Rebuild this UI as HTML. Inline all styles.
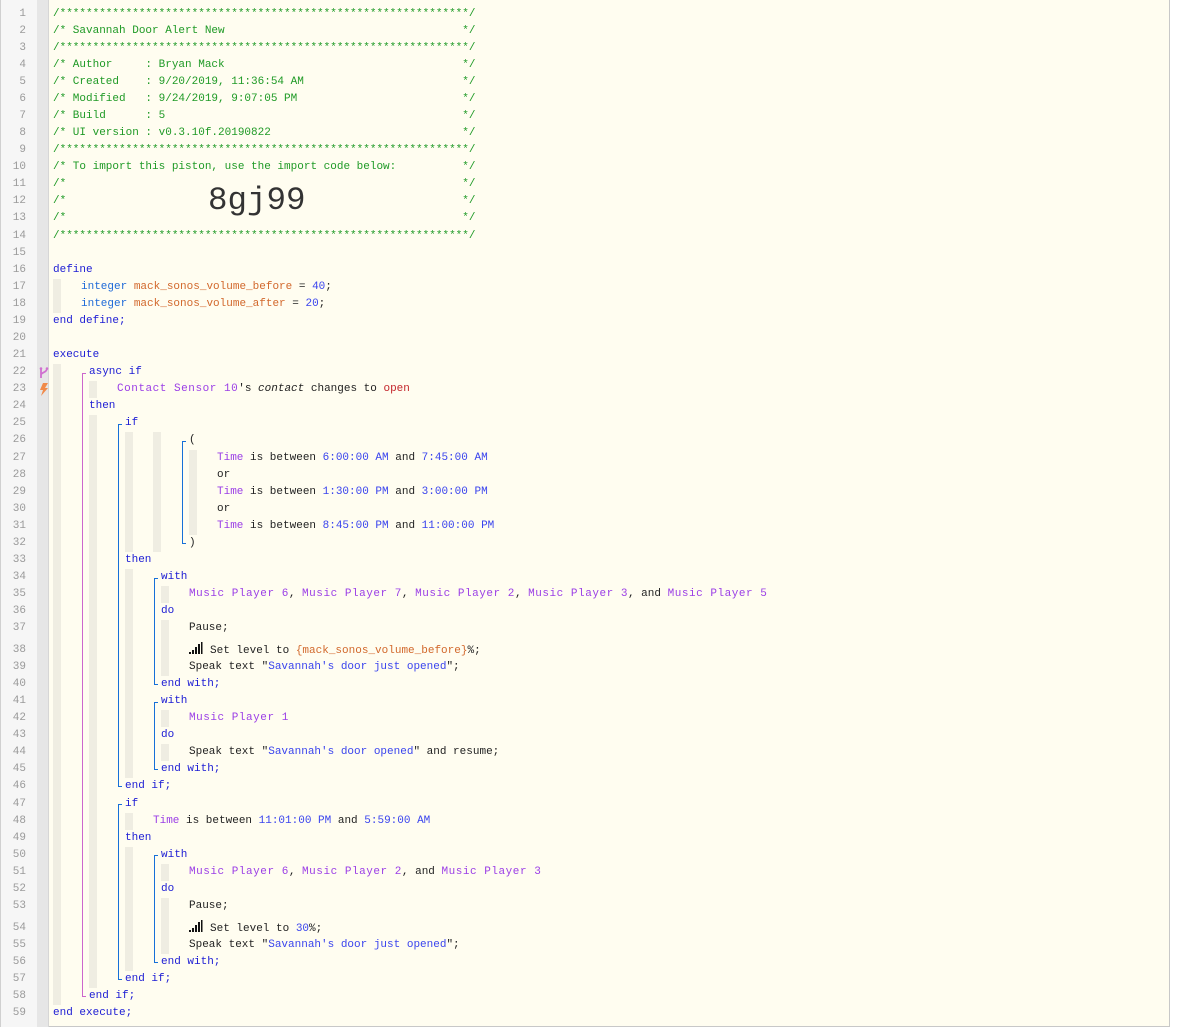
<!DOCTYPE html>
<html><head><meta charset="utf-8"><style>
*{margin:0;padding:0;box-sizing:border-box}
body{width:1178px;height:1032px;background:#fff;position:relative;overflow:hidden;font-family:"Liberation Mono",monospace;font-size:11px;color:#222}
#g1{position:absolute;left:0;top:0;width:37px;height:1027px;background:#f6f6f6;border-left:1px solid #d0d0d0}
#g2{position:absolute;left:37px;top:0;width:12px;height:1027px;background:#e6e6e6;border-right:1px solid #d6d6d6}
#bg{position:absolute;left:49px;top:0;width:1121px;height:1027px;background:#fffdf0;border-right:1px solid #c8c8c8;border-bottom:1px solid #c8c8c8}
#code{position:absolute;left:0;top:5.5px;width:1170px}
.L{position:relative;height:17.08px}
.I{position:relative;height:21.5px}
.L>*,.I>*{position:absolute}
.n{right:1144px;top:0;line-height:17px;color:#9a9a9a;font-style:normal;text-align:right;width:30px}
.t{top:0;line-height:17px;white-space:pre}
.I .t,.I .n{top:4.5px}
b{top:0;bottom:0;width:8px;background:#efede2}
.bs,.bm,.be{width:1px;background:#1670d8}
.bs{top:8.5px;bottom:0}.bm{top:0;bottom:0}.be{top:0;height:9px}
.bs:before,.be:before{content:"";position:absolute;left:0;width:4px;height:1px;background:inherit}
.bs:before{top:0}.be:before{bottom:0}
.p{background:#cc66cc}
.k{color:#1c1cd4}.c{color:#1f9a26}.d{color:#9b3ee6}.v{color:#3a44ee}.o{color:#d2682c}.r{color:#c4262c}.ty{color:#1e6ad8}
.dv{color:#9b3ee6;letter-spacing:0.53px}
.big{font-size:32.5px;color:#333;position:absolute;left:208px;top:-10px;line-height:36px}
.sig{display:inline-block;width:21px;height:12px;vertical-align:-1px}
</style></head><body>
<div id="g1"></div><div id="g2"></div><div id="bg"></div>
<div id="code">
<div class="L"><i class="n">1</i><span class="t c" style="left:53px">/**************************************************************/</span></div>
<div class="L"><i class="n">2</i><span class="t c" style="left:53px">/* Savannah Door Alert New                                    */</span></div>
<div class="L"><i class="n">3</i><span class="t c" style="left:53px">/**************************************************************/</span></div>
<div class="L"><i class="n">4</i><span class="t c" style="left:53px">/* Author     : Bryan Mack                                    */</span></div>
<div class="L"><i class="n">5</i><span class="t c" style="left:53px">/* Created    : 9/20/2019, 11:36:54 AM                        */</span></div>
<div class="L"><i class="n">6</i><span class="t c" style="left:53px">/* Modified   : 9/24/2019, 9:07:05 PM                         */</span></div>
<div class="L"><i class="n">7</i><span class="t c" style="left:53px">/* Build      : 5                                             */</span></div>
<div class="L"><i class="n">8</i><span class="t c" style="left:53px">/* UI version : v0.3.10f.20190822                             */</span></div>
<div class="L"><i class="n">9</i><span class="t c" style="left:53px">/**************************************************************/</span></div>
<div class="L"><i class="n">10</i><span class="t c" style="left:53px">/* To import this piston, use the import code below:          */</span></div>
<div class="L"><i class="n">11</i><span class="t c" style="left:53px">/*                                                            */</span></div>
<div class="L"><i class="n">12</i><span class="t c" style="left:53px">/*                                                            */</span><span class="big">8gj99</span></div>
<div class="L"><i class="n">13</i><span class="t c" style="left:53px">/*                                                            */</span></div>
<div class="L"><i class="n">14</i><span class="t c" style="left:53px">/**************************************************************/</span></div>
<div class="L"><i class="n">15</i></div>
<div class="L"><i class="n">16</i><span class="t k" style="left:53px">define</span></div>
<div class="L"><i class="n">17</i><b style="left:53px;width:8px"></b><span class="t" style="left:81px"><span class="ty">integer</span> <span class="o">mack_sonos_volume_before</span> = <span class="v">40</span>;</span></div>
<div class="L"><i class="n">18</i><b style="left:53px"></b><span class="t" style="left:81px"><span class="ty">integer</span> <span class="o">mack_sonos_volume_after</span> = <span class="v">20</span>;</span></div>
<div class="L"><i class="n">19</i><span class="t k" style="left:53px">end define;</span></div>
<div class="L"><i class="n">20</i></div>
<div class="L"><i class="n">21</i><span class="t k" style="left:53px">execute</span></div>
<div class="L"><i class="n">22</i><svg style="left:39px;top:3px" width="10" height="12" viewBox="0 0 10 12"><path d="M2 1v10M2 8c0-3 6-2 6-7M8 1v1" stroke="#d070d0" stroke-width="1.8" fill="none"/><circle cx="2" cy="1.5" r="1.3" fill="#d070d0"/><circle cx="8" cy="1.5" r="1.3" fill="#d070d0"/></svg><b style="left:53px"></b><i class="bs p" style="left:82px"></i><span class="t k" style="left:89px">async if</span></div>
<div class="L"><i class="n">23</i><svg style="left:39px;top:2px" width="10" height="13" viewBox="0 0 10 13"><path d="M4 0h5L6 5h3L2 13l2-6H1z" fill="#f08a4a"/></svg><b style="left:53px"></b><i class="bm p" style="left:82px"></i><b style="left:89px"></b><span class="t" style="left:117px"><span class="dv">Contact Sensor 10</span>'s <i>contact</i> changes to <span class="r">open</span></span></div>
<div class="L"><i class="n">24</i><b style="left:53px"></b><i class="bm p" style="left:82px"></i><span class="t k" style="left:89px">then</span></div>
<div class="L"><i class="n">25</i><b style="left:53px"></b><i class="bm p" style="left:82px"></i><b style="left:89px"></b><i class="bs" style="left:118px"></i><span class="t k" style="left:125px">if</span></div>
<div class="L"><i class="n">26</i><b style="left:53px"></b><i class="bm p" style="left:82px"></i><b style="left:89px"></b><i class="bm" style="left:118px"></i><b style="left:125px"></b><b style="left:153px"></b><i class="bs" style="left:182px"></i><span class="t" style="left:189px">(</span></div>
<div class="L"><i class="n">27</i><b style="left:53px"></b><i class="bm p" style="left:82px"></i><b style="left:89px"></b><i class="bm" style="left:118px"></i><b style="left:125px"></b><b style="left:153px"></b><i class="bm" style="left:182px"></i><b style="left:189px"></b><span class="t" style="left:217px"><span class="d">Time</span> is between <span class="v">6:00:00 AM</span> and <span class="v">7:45:00 AM</span></span></div>
<div class="L"><i class="n">28</i><b style="left:53px"></b><i class="bm p" style="left:82px"></i><b style="left:89px"></b><i class="bm" style="left:118px"></i><b style="left:125px"></b><b style="left:153px"></b><i class="bm" style="left:182px"></i><b style="left:189px"></b><span class="t" style="left:217px">or</span></div>
<div class="L"><i class="n">29</i><b style="left:53px"></b><i class="bm p" style="left:82px"></i><b style="left:89px"></b><i class="bm" style="left:118px"></i><b style="left:125px"></b><b style="left:153px"></b><i class="bm" style="left:182px"></i><b style="left:189px"></b><span class="t" style="left:217px"><span class="d">Time</span> is between <span class="v">1:30:00 PM</span> and <span class="v">3:00:00 PM</span></span></div>
<div class="L"><i class="n">30</i><b style="left:53px"></b><i class="bm p" style="left:82px"></i><b style="left:89px"></b><i class="bm" style="left:118px"></i><b style="left:125px"></b><b style="left:153px"></b><i class="bm" style="left:182px"></i><b style="left:189px"></b><span class="t" style="left:217px">or</span></div>
<div class="L"><i class="n">31</i><b style="left:53px"></b><i class="bm p" style="left:82px"></i><b style="left:89px"></b><i class="bm" style="left:118px"></i><b style="left:125px"></b><b style="left:153px"></b><i class="bm" style="left:182px"></i><b style="left:189px"></b><span class="t" style="left:217px"><span class="d">Time</span> is between <span class="v">8:45:00 PM</span> and <span class="v">11:00:00 PM</span></span></div>
<div class="L"><i class="n">32</i><b style="left:53px"></b><i class="bm p" style="left:82px"></i><b style="left:89px"></b><i class="bm" style="left:118px"></i><b style="left:125px"></b><b style="left:153px"></b><i class="be" style="left:182px"></i><span class="t" style="left:189px">)</span></div>
<div class="L"><i class="n">33</i><b style="left:53px"></b><i class="bm p" style="left:82px"></i><b style="left:89px"></b><i class="bm" style="left:118px"></i><span class="t k" style="left:125px">then</span></div>
<div class="L"><i class="n">34</i><b style="left:53px"></b><i class="bm p" style="left:82px"></i><b style="left:89px"></b><i class="bm" style="left:118px"></i><b style="left:125px"></b><i class="bs" style="left:154px"></i><span class="t k" style="left:161px">with</span></div>
<div class="L"><i class="n">35</i><b style="left:53px"></b><i class="bm p" style="left:82px"></i><b style="left:89px"></b><i class="bm" style="left:118px"></i><b style="left:125px"></b><i class="bm" style="left:154px"></i><b style="left:161px"></b><span class="t" style="left:189px"><span class="dv">Music Player 6</span>, <span class="dv">Music Player 7</span>, <span class="dv">Music Player 2</span>, <span class="dv">Music Player 3</span>, and <span class="dv">Music Player 5</span></span></div>
<div class="L"><i class="n">36</i><b style="left:53px"></b><i class="bm p" style="left:82px"></i><b style="left:89px"></b><i class="bm" style="left:118px"></i><b style="left:125px"></b><i class="bm" style="left:154px"></i><span class="t k" style="left:161px">do</span></div>
<div class="L"><i class="n">37</i><b style="left:53px"></b><i class="bm p" style="left:82px"></i><b style="left:89px"></b><i class="bm" style="left:118px"></i><b style="left:125px"></b><i class="bm" style="left:154px"></i><b style="left:161px"></b><span class="t" style="left:189px">Pause;</span></div>
<div class="I"><i class="n">38</i><b style="left:53px"></b><i class="bm p" style="left:82px"></i><b style="left:89px"></b><i class="bm" style="left:118px"></i><b style="left:125px"></b><i class="bm" style="left:154px"></i><b style="left:161px"></b><span class="t" style="left:189px"><svg class="sig" viewBox="0 0 21 12"><path d="M0 10h2v2H0zM3 8h2v4H3zM6 5h2v7H6zM9 2h2v10H9zM12 0h1.5v12H12z" fill="#111"/></svg>Set level to <span class="o">{mack_sonos_volume_before}</span>%;</span></div>
<div class="L"><i class="n">39</i><b style="left:53px"></b><i class="bm p" style="left:82px"></i><b style="left:89px"></b><i class="bm" style="left:118px"></i><b style="left:125px"></b><i class="bm" style="left:154px"></i><b style="left:161px"></b><span class="t" style="left:189px">Speak text "<span class="v">Savannah's door just opened</span>";</span></div>
<div class="L"><i class="n">40</i><b style="left:53px"></b><i class="bm p" style="left:82px"></i><b style="left:89px"></b><i class="bm" style="left:118px"></i><b style="left:125px"></b><i class="be" style="left:154px"></i><span class="t k" style="left:161px">end with;</span></div>
<div class="L"><i class="n">41</i><b style="left:53px"></b><i class="bm p" style="left:82px"></i><b style="left:89px"></b><i class="bm" style="left:118px"></i><b style="left:125px"></b><i class="bs" style="left:154px"></i><span class="t k" style="left:161px">with</span></div>
<div class="L"><i class="n">42</i><b style="left:53px"></b><i class="bm p" style="left:82px"></i><b style="left:89px"></b><i class="bm" style="left:118px"></i><b style="left:125px"></b><i class="bm" style="left:154px"></i><b style="left:161px"></b><span class="t dv" style="left:189px">Music Player 1</span></div>
<div class="L"><i class="n">43</i><b style="left:53px"></b><i class="bm p" style="left:82px"></i><b style="left:89px"></b><i class="bm" style="left:118px"></i><b style="left:125px"></b><i class="bm" style="left:154px"></i><span class="t k" style="left:161px">do</span></div>
<div class="L"><i class="n">44</i><b style="left:53px"></b><i class="bm p" style="left:82px"></i><b style="left:89px"></b><i class="bm" style="left:118px"></i><b style="left:125px"></b><i class="bm" style="left:154px"></i><b style="left:161px"></b><span class="t" style="left:189px">Speak text "<span class="v">Savannah's door opened</span>" and resume;</span></div>
<div class="L"><i class="n">45</i><b style="left:53px"></b><i class="bm p" style="left:82px"></i><b style="left:89px"></b><i class="bm" style="left:118px"></i><b style="left:125px"></b><i class="be" style="left:154px"></i><span class="t k" style="left:161px">end with;</span></div>
<div class="L"><i class="n">46</i><b style="left:53px"></b><i class="bm p" style="left:82px"></i><b style="left:89px"></b><i class="be" style="left:118px"></i><span class="t k" style="left:125px">end if;</span></div>
<div class="L"><i class="n">47</i><b style="left:53px"></b><i class="bm p" style="left:82px"></i><b style="left:89px"></b><i class="bs" style="left:118px"></i><span class="t k" style="left:125px">if</span></div>
<div class="L"><i class="n">48</i><b style="left:53px"></b><i class="bm p" style="left:82px"></i><b style="left:89px"></b><i class="bm" style="left:118px"></i><b style="left:125px"></b><span class="t" style="left:153px"><span class="d">Time</span> is between <span class="v">11:01:00 PM</span> and <span class="v">5:59:00 AM</span></span></div>
<div class="L"><i class="n">49</i><b style="left:53px"></b><i class="bm p" style="left:82px"></i><b style="left:89px"></b><i class="bm" style="left:118px"></i><span class="t k" style="left:125px">then</span></div>
<div class="L"><i class="n">50</i><b style="left:53px"></b><i class="bm p" style="left:82px"></i><b style="left:89px"></b><i class="bm" style="left:118px"></i><b style="left:125px"></b><i class="bs" style="left:154px"></i><span class="t k" style="left:161px">with</span></div>
<div class="L"><i class="n">51</i><b style="left:53px"></b><i class="bm p" style="left:82px"></i><b style="left:89px"></b><i class="bm" style="left:118px"></i><b style="left:125px"></b><i class="bm" style="left:154px"></i><b style="left:161px"></b><span class="t" style="left:189px"><span class="dv">Music Player 6</span>, <span class="dv">Music Player 2</span>, and <span class="dv">Music Player 3</span></span></div>
<div class="L"><i class="n">52</i><b style="left:53px"></b><i class="bm p" style="left:82px"></i><b style="left:89px"></b><i class="bm" style="left:118px"></i><b style="left:125px"></b><i class="bm" style="left:154px"></i><span class="t k" style="left:161px">do</span></div>
<div class="L"><i class="n">53</i><b style="left:53px"></b><i class="bm p" style="left:82px"></i><b style="left:89px"></b><i class="bm" style="left:118px"></i><b style="left:125px"></b><i class="bm" style="left:154px"></i><b style="left:161px"></b><span class="t" style="left:189px">Pause;</span></div>
<div class="I"><i class="n">54</i><b style="left:53px"></b><i class="bm p" style="left:82px"></i><b style="left:89px"></b><i class="bm" style="left:118px"></i><b style="left:125px"></b><i class="bm" style="left:154px"></i><b style="left:161px"></b><span class="t" style="left:189px"><svg class="sig" viewBox="0 0 21 12"><path d="M0 10h2v2H0zM3 8h2v4H3zM6 5h2v7H6zM9 2h2v10H9zM12 0h1.5v12H12z" fill="#111"/></svg>Set level to <span class="v">30</span>%;</span></div>
<div class="L"><i class="n">55</i><b style="left:53px"></b><i class="bm p" style="left:82px"></i><b style="left:89px"></b><i class="bm" style="left:118px"></i><b style="left:125px"></b><i class="bm" style="left:154px"></i><b style="left:161px"></b><span class="t" style="left:189px">Speak text "<span class="v">Savannah's door just opened</span>";</span></div>
<div class="L"><i class="n">56</i><b style="left:53px"></b><i class="bm p" style="left:82px"></i><b style="left:89px"></b><i class="bm" style="left:118px"></i><b style="left:125px"></b><i class="be" style="left:154px"></i><span class="t k" style="left:161px">end with;</span></div>
<div class="L"><i class="n">57</i><b style="left:53px"></b><i class="bm p" style="left:82px"></i><b style="left:89px"></b><i class="be" style="left:118px"></i><span class="t k" style="left:125px">end if;</span></div>
<div class="L"><i class="n">58</i><b style="left:53px"></b><i class="be p" style="left:82px"></i><span class="t k" style="left:89px">end if;</span></div>
<div class="L"><i class="n">59</i><span class="t k" style="left:53px">end execute;</span></div>
</div>
</body></html>
